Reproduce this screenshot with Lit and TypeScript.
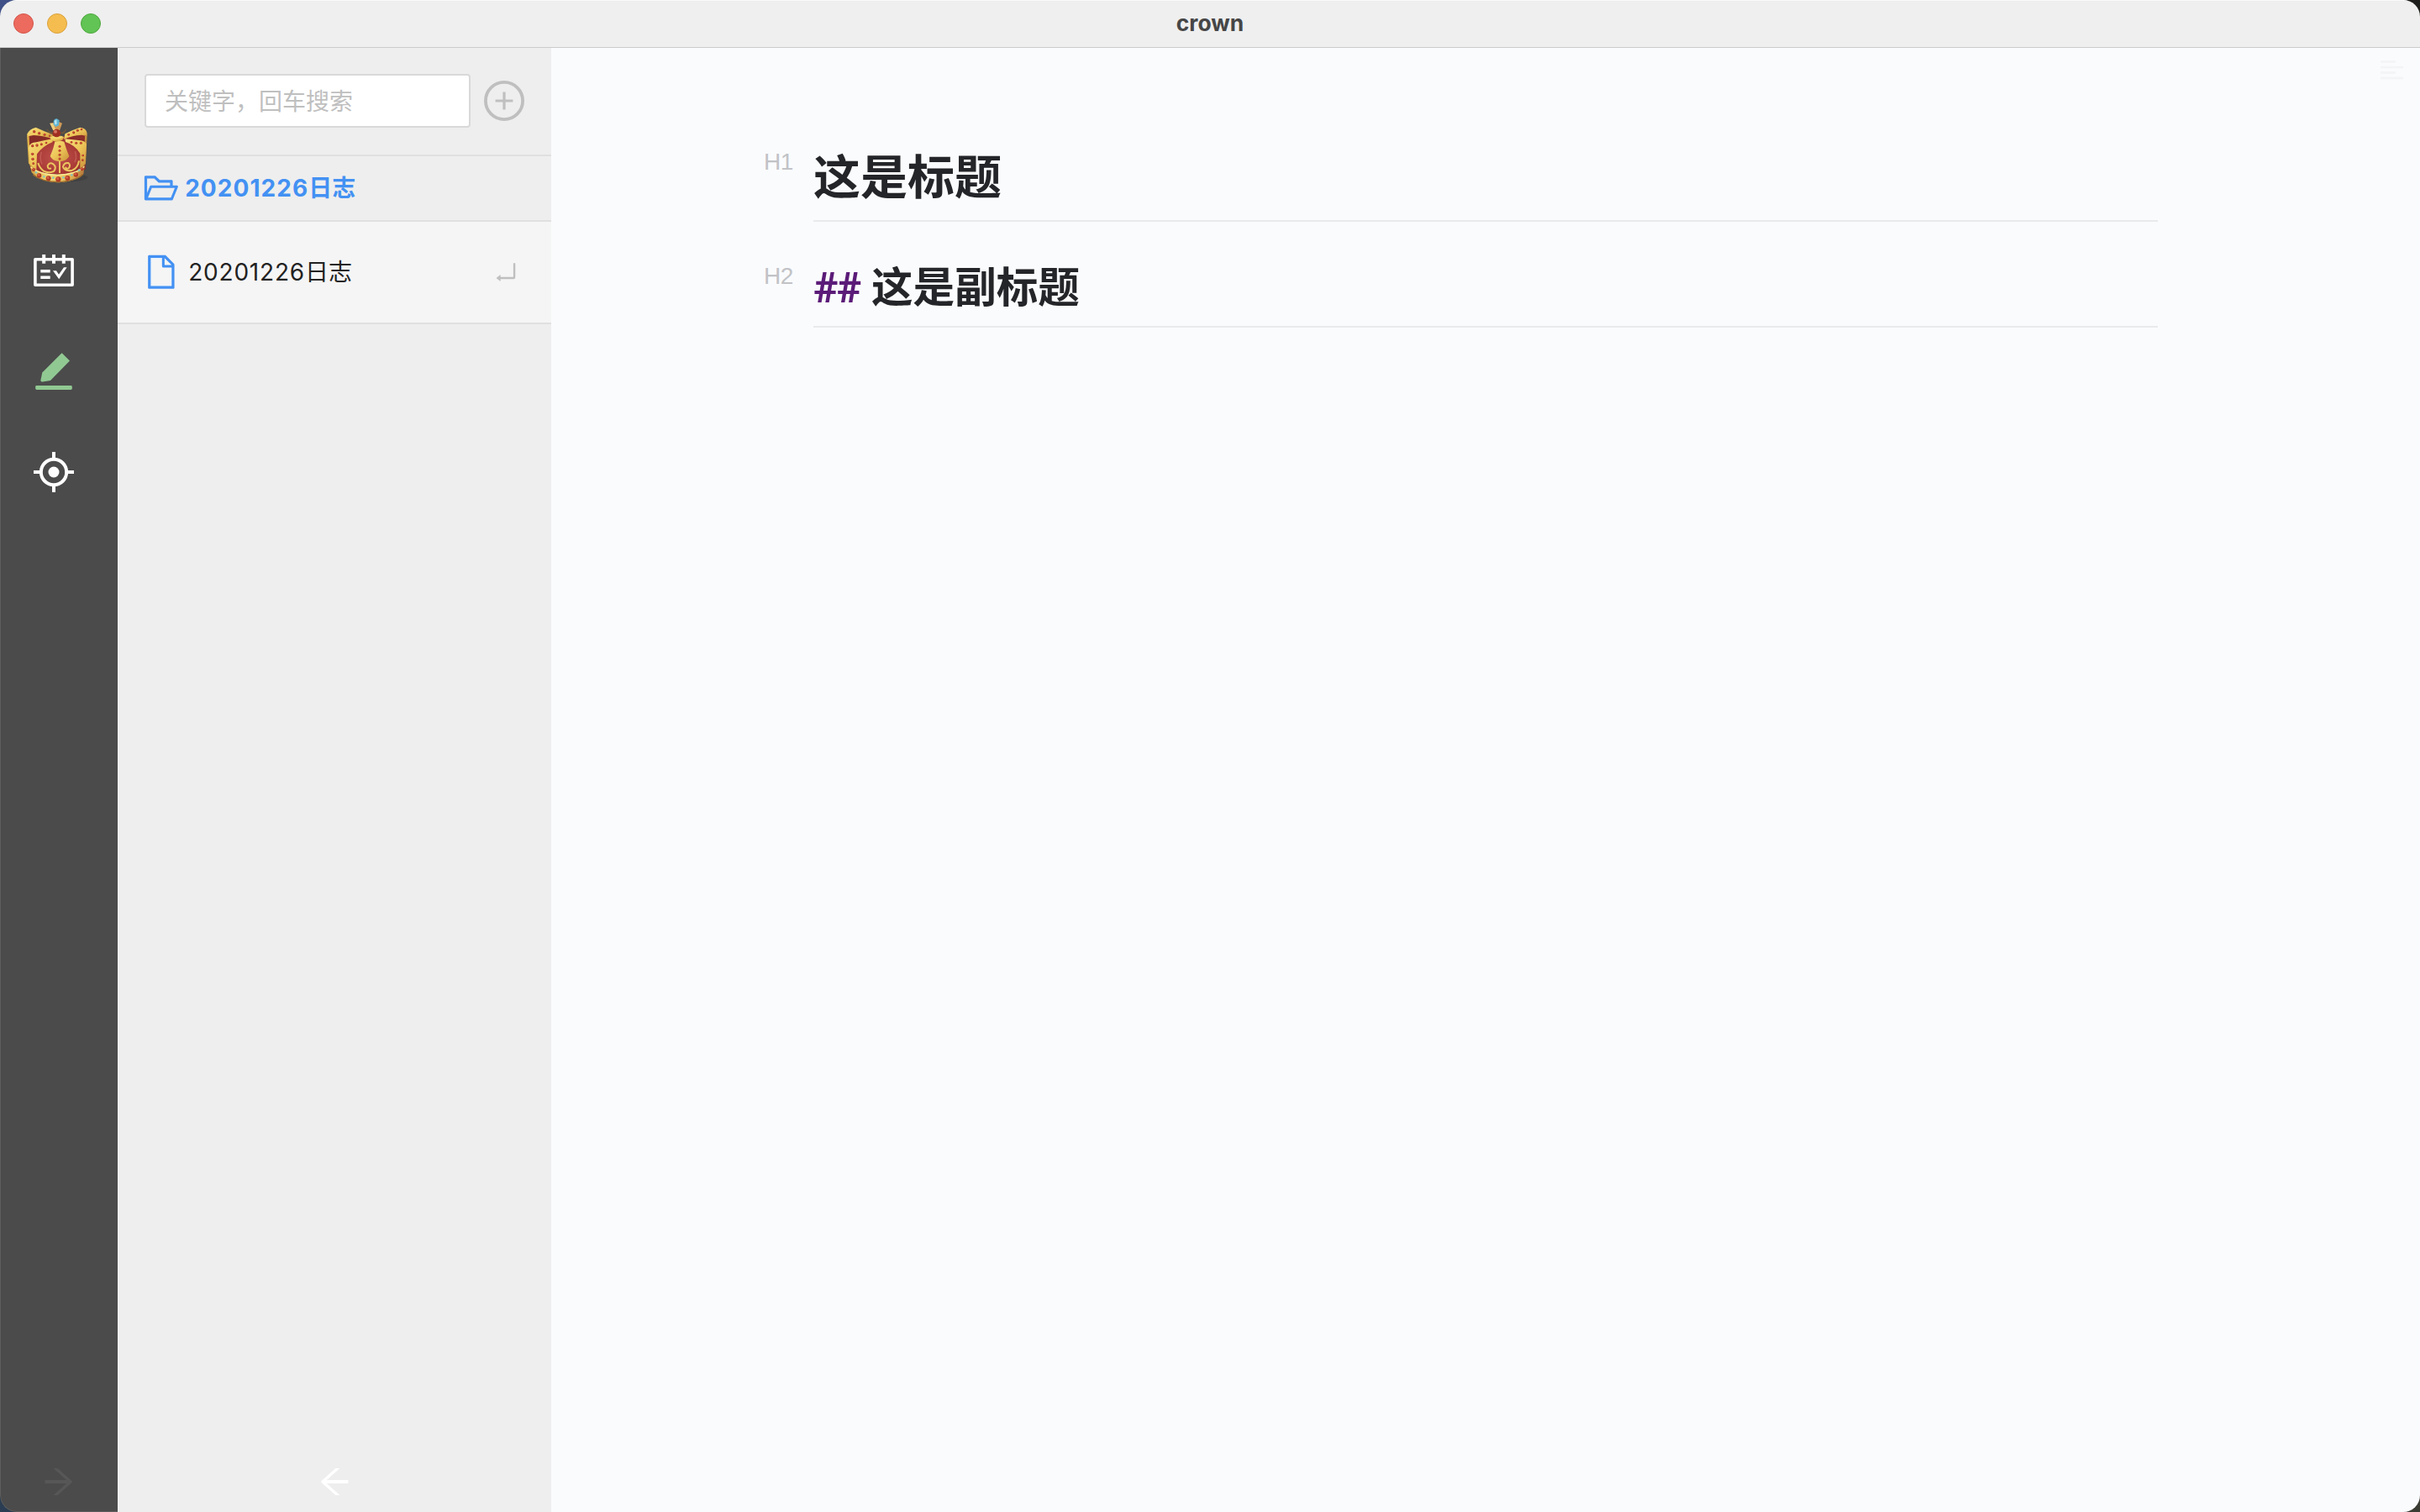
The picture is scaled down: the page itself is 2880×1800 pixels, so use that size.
import { LitElement, html, css, svg } from "lit";
import { customElement } from "lit/decorators.js";

const gem = (x: number, y: number, r: number) => svg`
  <circle cx=${x} cy=${y} r=${r} fill="#b03a25"></circle>
  <circle cx=${x - r * 0.2} cy=${y - r * 0.25} r=${r * 0.5} fill="#d65f48"></circle>`;

const gems: [number, number, number][] = [
  [62, 80, 5], [80, 86, 5], [99, 91, 4.5], [117, 95, 3.5],
  [185, 91, 4], [203, 83, 4.5], [217, 76, 4.5], [231, 72, 4],
  [56, 131, 5], [72, 129, 5], [88, 125, 4.5], [105, 120, 4],
  [153, 133, 4.5], [153, 148, 4.5], [153, 163, 4.5], [153, 177, 4.5],
  [195, 118, 4], [212, 121, 4.5], [229, 121, 4.5],
  [56, 160, 5], [57, 178, 5], [59, 194, 4], [236, 165, 4], [235, 182, 4],
  [60, 216, 6], [80, 237, 8], [113, 247, 9], [148, 250, 9.5], [181, 246, 9], [211, 234, 8], [233, 214, 6],
];

@customElement("crown-logo")
export class CrownLogo extends LitElement {
  static styles = css`
    :host { display: block; width: 100px; height: 100px; }
    svg { display: block; }
  `;
  render() {
    return html`<svg width="100" height="100" viewBox="0 0 300 300">
      <defs>
        <linearGradient id="gold" x1="0" y1="0" x2="1" y2="1">
          <stop offset="0" stop-color="#f5e07c"></stop>
          <stop offset="0.5" stop-color="#edc659"></stop>
          <stop offset="1" stop-color="#cb9038"></stop>
        </linearGradient>
        <linearGradient id="band" x1="0" y1="0" x2="1" y2="0">
          <stop offset="0" stop-color="#d09a3d"></stop>
          <stop offset="0.35" stop-color="#f6dc74"></stop>
          <stop offset="0.7" stop-color="#e9bd58"></stop>
          <stop offset="1" stop-color="#b3763a"></stop>
        </linearGradient>
        <radialGradient id="velvet" cx="0.5" cy="0.6" r="0.6">
          <stop offset="0" stop-color="#c0524c"></stop>
          <stop offset="0.6" stop-color="#aa3b36"></stop>
          <stop offset="1" stop-color="#7f2524"></stop>
        </radialGradient>
      </defs>
      <ellipse cx="165" cy="244" rx="88" ry="16" fill="#3a3a3a" opacity="0.6"></ellipse>
      <path d="M40 90 Q100 78 145 108 Q200 78 248 86 L245 215 Q150 250 48 215Z" fill="url(#velvet)"></path>
      <path d="M40 92 Q70 90 116 108 Q84 108 46 124Z" fill="#852b28"></path>
      <path d="M249 88 Q222 92 188 106 Q222 106 247 116Z" fill="#8c2e2a"></path>
      <path d="M36 90 Q44 71 68 65 Q96 78 128 90 L130 107 Q98 95 60 93 L40 97Z" fill="url(#gold)"></path>
      <path d="M251 86 Q248 67 226 65 Q200 73 172 88 L168 107 Q198 94 232 92 L250 96Z" fill="url(#gold)"></path>
      <path d="M36 92 L44 97 L48 198 L42 194Z" fill="#dcb04a"></path>
      <path d="M251 90 L243 96 L240 198 L246 194Z" fill="#c58c3f"></path>
      <path d="M42 138 Q46 118 70 118 Q102 111 128 106 L128 117 Q92 132 72 160 L70 216 L47 202Z" fill="url(#gold)"></path>
      <path d="M249 126 Q246 112 222 111 L172 106 L174 117 Q208 128 226 158 L226 212 L244 198Z" fill="url(#gold)"></path>
      <path d="M136 116 Q152 111 169 116 Q177 145 187 168 Q178 184 160 186 L146 186 Q128 184 119 168 Q131 142 136 116Z" fill="url(#gold)"></path>
      <path d="M88 152 Q80 176 90 196 M208 150 Q216 176 206 190" fill="none" stroke="#cf6f64" stroke-width="5" opacity="0.55"></path>
      <path d="M46 195 Q72 226 108 230 Q160 238 202 224 Q234 212 243 194 L238 232 Q218 256 150 262 Q84 260 53 226Z" fill="url(#band)"></path>
      <path d="M50 207 Q78 233 145 235 Q214 233 241 205" fill="none" stroke="#fae998" stroke-width="4"></path>
      <path d="M58 234 Q88 259 150 260 Q212 256 236 232" fill="none" stroke="#9e6c2d" stroke-width="4"></path>
      <g fill="none" stroke="#ebc75f" stroke-width="6">
        <path d="M76 192 Q80 208 96 221 Q112 230 132 222 Q144 208 130 196 Q116 188 110 202 Q110 215 123 211"></path>
        <path d="M222 184 Q218 210 198 218 Q172 224 165 206 Q168 190 184 192 Q194 200 185 211 Q176 215 174 206"></path>
        <path d="M153 185 L153 228"></path>
      </g>
      <g fill="#8cc7bb">
        <circle cx="97" cy="241" r="4"></circle><circle cx="130" cy="245" r="4"></circle>
        <circle cx="166" cy="244" r="4"></circle><circle cx="196" cy="235" r="4"></circle>
        <circle cx="222" cy="218" r="4"></circle><circle cx="69" cy="226" r="4"></circle>
      </g>
      ${gems.map(([x, y, r]) => gem(x, y, r))}
      <path d="M118 101 Q142 88 168 99 Q168 114 142 116 Q124 114 118 101Z" fill="url(#gold)"></path>
      <path d="M108 72 Q116 86 132 84 M176 72 Q168 86 154 84 M112 80 L124 88 M172 80 L162 88" fill="none" stroke="#71573a" stroke-width="4"></path>
      <path d="M118 50 L134 48 L148 44 L162 50 L153 76 L130 76Z" fill="#d09a55"></path>
      <path d="M118 50 L130 50 L139 76 L130 76Z" fill="#efcf80"></path>
      <circle cx="142" cy="86" r="14.5" fill="#a03022"></circle>
      <circle cx="138" cy="80" r="6" fill="#d4755f"></circle>
      <path d="M125 99 Q144 109 163 98" fill="none" stroke="#f1d76e" stroke-width="6"></path>
      <path d="M131 42 Q134 33 143 34 L152 40 L150 58 L139 63 L131 55Z" fill="#5eb5d6"></path>
      <path d="M134 42 L142 37 L143 52 L137 56Z" fill="#b9e6f2"></path>
    </svg>`;
  }
}

const calendarIcon = svg`
  <path fill="none" stroke="#fff" stroke-width="3.6" stroke-linejoin="round" d="M1.9 10.7H46.1V41.2H1.9Z"></path>
  <path stroke="#fff" stroke-width="4" d="M12.2 5V15.8M24 5V15.8M35.8 5V15.8"></path>
  <path stroke="#fff" stroke-width="3.4" d="M8.3 24.7H19.7M8.3 32.2H19.7"></path>
  <path fill="#fff" d="M23 24.2H27L30 28.8L36 20.3H39.6L30.2 34.2Z"></path>`;

const penIcon = svg`
  <path fill="#91c993" d="M33.6 2.3L43 11.6L20 35.1L10.6 36.6Q8.2 36.8 8.4 34.4L10.3 25.4Z"></path>
  <rect x="2.2" y="41.1" width="43.6" height="4.8" rx="1.4" fill="#91c993"></rect>`;

const aimIcon = svg`
  <circle cx="24" cy="24" r="15.2" fill="none" stroke="#fff" stroke-width="4"></circle>
  <circle cx="24" cy="24" r="6.5" fill="#fff"></circle>
  <path stroke="#fff" stroke-width="4" d="M24 0V8M24 40V48M0 24H8M40 24H48"></path>`;

@customElement("nav-rail")
export class NavRail extends LitElement {
  static styles = css`
    :host {
      display: flex; flex-direction: column; width: 140px; box-sizing: border-box;
      background: #4b4b4b; padding: 73px 0 19px; border-left: 1px solid #5e5e5e; border-bottom: 1px solid #5e5e5e;
      border-bottom-left-radius: 20px;
    }
    svg { display: block; }
    .logo { margin-left: 19px; }
    .items { display: flex; flex-direction: column; gap: 72px; margin: 68px 0 0 39px; }
    .expand { margin: auto 0 0 52px; }
  `;
  render() {
    return html`
      <crown-logo class="logo"></crown-logo>
      <div class="items">
        ${[calendarIcon, penIcon, aimIcon].map(
          (icon) => html`<svg width="48" height="48" viewBox="0 0 48 48">${icon}</svg>`
        )}
      </div>
      <svg class="expand" width="34" height="32" viewBox="0 0 34 32" fill="none" stroke="#575757">
        <path stroke-width="4" d="M0.6 16H31"></path>
        <path stroke-width="3.4" d="M12 -1L31 16L12 33" stroke-linejoin="round"></path>
      </svg>`;
  }
}

@customElement("note-list")
export class NoteList extends LitElement {
  static styles = css`
    :host {
      display: flex; flex-direction: column; width: 516px; box-sizing: border-box; background: #eee;
      font-family: Inter, "Noto Sans CJK SC", sans-serif; font-size: 28px;
    }
    svg { display: block; flex: none; }
    .search { display: flex; align-items: center; gap: 16px; height: 126px; padding: 0 32px 1px; border-bottom: 2px solid #e0e0e0; }
    .field {
      flex: 1; height: 64px; box-sizing: border-box; display: flex; align-items: center;
      border: 2px solid #d9d9d9; border-radius: 4px; background: #fff; padding: 0 0 3px 22px; color: #bfbfbf;
      font-family: "Noto Sans CJK SC", sans-serif;
    }
    .folder { display: flex; align-items: center; height: 76px; padding-left: 29px; border-bottom: 2px solid #e0e0e0; color: #4391f3; font-weight: 700; }
    .folder span { margin-left: 5.5px; padding-bottom: 4px; }
    .note { display: flex; align-items: center; height: 120px; padding: 0 38px 0 29px; border-bottom: 2px solid #e0e0e0; background: #f5f5f5; color: #222; }
    .note span { flex: 1; margin-left: 9.5px; padding-bottom: 4px; }
    .folder b { font-weight: 700; letter-spacing: 1.05px; }
    .note b { font-weight: 400; letter-spacing: 0.8px; }
    .collapse { margin: auto auto 20px 241px; }
  `;
  render() {
    return html`
      <div class="search">
        <div class="field">关键字，回车搜索</div>
        <svg width="48" height="48" viewBox="0 0 48 48" fill="none" stroke="#bfbfbf">
          <circle cx="24" cy="24" r="22.1" stroke-width="3.8"></circle>
          <path stroke-width="3.2" d="M13.6 24H34.4M24 13.6V34.4"></path>
        </svg>
      </div>
      <div class="folder">
        <svg width="45.7" height="45.7" viewBox="0 0 1024 1024" fill="#4391f3">
          <path d="M928 444H820V330.4c0-17.7-14.3-32-32-32H473L355.7 186.2a8.15 8.15 0 00-5.5-2.2H96c-17.7 0-32 14.3-32 32v592c0 17.7 14.3 32 32 32h698c13 0 24.8-7.9 29.7-20l134-332c1.5-3.8 2.3-7.9 2.3-12 0-17.7-14.3-32-32-32zM136 256h188.5l119.6 114.4H748V444H238c-13 0-24.8 7.9-29.7 20L136 643.2V256zm635.3 512H159l103.3-256h612.4L771.3 768z"></path>
        </svg>
        <span><b>20201226</b>日志</span>
      </div>
      <div class="note">
        <svg width="45.7" height="45.7" viewBox="0 0 1024 1024" fill="#4391f3">
          <path fill="#e6f3ff" d="M534 352V136H232v752h560V394H576a42 42 0 01-42-42z"></path>
          <path fill="#f5f5f5" d="M534 352V160H256v704h512V394H576a42 42 0 01-42-42z"></path>
          <path d="M854.6 288.6L639.4 73.4c-6-6-14.1-9.4-22.6-9.4H192c-17.7 0-32 14.3-32 32v832c0 17.7 14.3 32 32 32h640c17.7 0 32-14.3 32-32V311.3c0-8.5-3.4-16.7-9.4-22.7zM790.2 326H602V137.8L790.2 326zm1.8 562H232V136h302v216a42 42 0 0042 42h216v494z"></path>
        </svg>
        <span><b>20201226</b>日志</span>
        <svg width="32" height="32" viewBox="0 0 1024 1024" fill="#bfbfbf">
          <path d="M864 170h-60c-4.4 0-8 3.6-8 8v518H310v-73c0-6.7-7.8-10.5-13-6.3l-141.9 112a8 8 0 000 12.6l141.9 112c5.3 4.2 13 .4 13-6.3v-75h498c35.3 0 64-28.7 64-64V178c0-4.4-3.6-8-8-8z"></path>
        </svg>
      </div>
      <svg class="collapse" width="34" height="32" viewBox="0 0 34 32" fill="none" stroke="#fff">
        <path stroke-width="4" d="M33.4 16H3"></path>
        <path stroke-width="3.4" d="M22 -1L3 16L22 33" stroke-linejoin="round"></path>
      </svg>`;
  }
}

@customElement("note-editor")
export class NoteEditor extends LitElement {
  static styles = css`
    :host {
      display: grid; flex: 1; grid-template-columns: 312px 1600px 1fr; align-items: start;
      background: #fafbfd; font-family: "Liberation Sans", "Noto Sans CJK SC", sans-serif; color: #242528;
    }
    .doc { grid-column: 1 / 3; }
    .row { display: grid; grid-template-columns: 253px 59px 1600px; }
    .level { grid-column: 2; font-size: 28px; line-height: 32px; color: #c1c2c6; letter-spacing: -0.5px; }
    .heading { grid-column: 3; box-sizing: border-box; font-weight: 700; border-bottom: 2px solid #e9eaec; white-space: pre; }
    .h1 { font-size: 56px; height: 207px; padding-top: 113px; line-height: 84px; }
    .h2 { font-size: 49.6px; height: 126px; padding-top: 42px; line-height: 74px; }
    .l1 { margin-top: 120px; }
    .l2 { margin-top: 49px; }
    .mark { display: inline-block; width: 55.2px; color: #5b1b78; font-family: Roboto, sans-serif; letter-spacing: -1.6px; }
    .outline { justify-self: end; margin: 15px 20px 0 0; display: block; }
  `;
  render() {
    return html`
      <div class="doc">
        <div class="row"><div class="level l1">H1</div><div class="heading h1">这是标题</div></div>
        <div class="row"><div class="level l2">H2</div><div class="heading h2"><span class="mark">##</span> 这是副标题</div></div>
      </div>
      <svg class="outline" width="27" height="23" viewBox="0 0 27 23" stroke="#f3f4f6" stroke-width="2.6">
        <path d="M0 1.5H18M0 8H27M0 14.5H18M0 21H27"></path>
      </svg>`;
  }
}

@customElement("app-root")
export class AppRoot extends LitElement {
  static styles = css`
    :host {
      display: block; width: 2880px; height: 1800px; overflow: hidden;
      background:
        linear-gradient(#2b3d52, #2b3d52) 0 100% / 40px 40px no-repeat,
        linear-gradient(#3a3b33, #3a3b33) 100% 100% / 40px 40px no-repeat,
        linear-gradient(#1d1d1b, #1d1d1b) 100% 0 / 40px 40px no-repeat,
        #3f5088;
    }
    .window { display: flex; flex-direction: column; height: 1800px; border-radius: 20px; overflow: hidden; }
    .titlebar {
      display: grid; grid-template-columns: 1fr auto 1fr; align-items: center; height: 57px; box-sizing: border-box;
      background: #efefef; border-top: 1px solid #fafafa; border-bottom: 1px solid #cbcbcb; padding: 0 16px 1px;
    }
    .lights { display: flex; gap: 16px; }
    .light { width: 24px; height: 24px; box-sizing: border-box; border-radius: 50%; border: 1px solid; }
    .close { background: #ed6a5e; border-color: #d35549; }
    .minimize { background: #f5bd4f; border-color: #d8a03c; }
    .zoom { background: #61c454; border-color: #4fa73f; }
    .title { font: 700 26.4px/30px Inter, sans-serif; color: #464646; padding-bottom: 3px; }
    .body { display: flex; flex: 1; }
  `;
  render() {
    return html`
      <div class="window">
        <div class="titlebar">
          <div class="lights">
            <div class="light close"></div><div class="light minimize"></div><div class="light zoom"></div>
          </div>
          <div class="title">crown</div>
        </div>
        <div class="body"><nav-rail></nav-rail><note-list></note-list><note-editor></note-editor></div>
      </div>`;
  }
}
